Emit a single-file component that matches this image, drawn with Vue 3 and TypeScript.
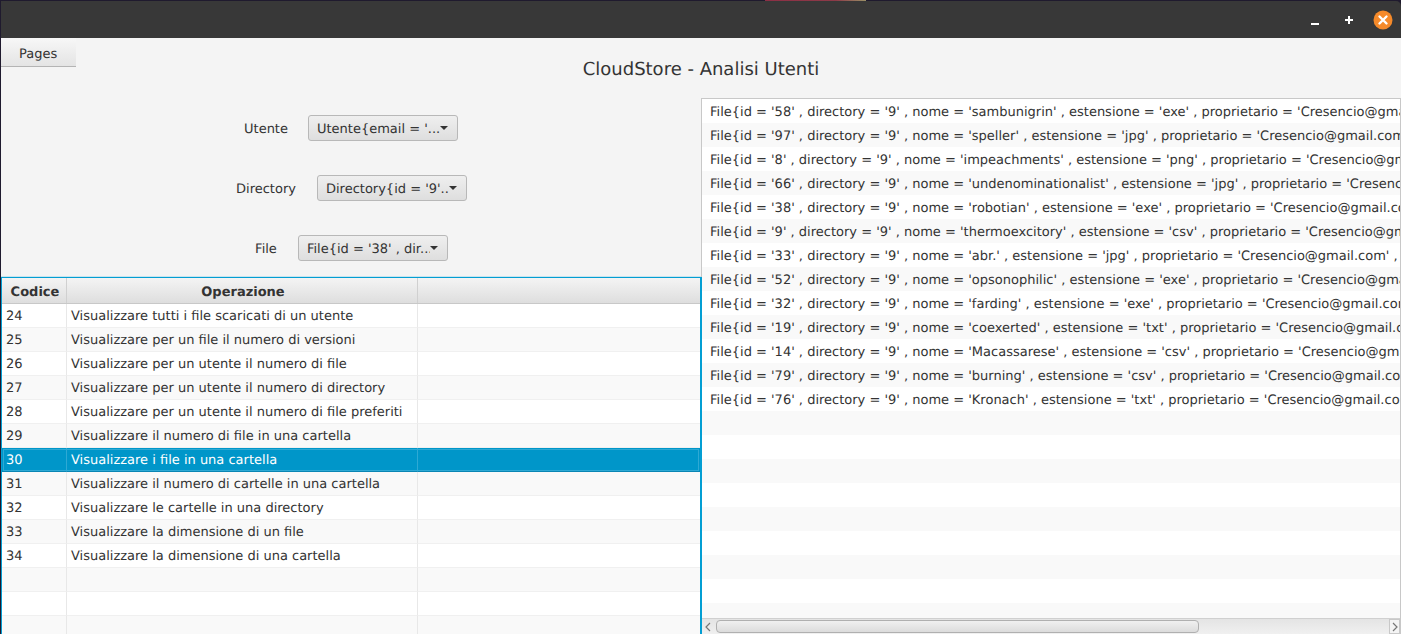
<script setup lang="ts">
const ops: [string, string][] = [
  ['24', 'Visualizzare tutti i file scaricati di un utente'],
  ['25', 'Visualizzare per un file il numero di versioni'],
  ['26', 'Visualizzare per un utente il numero di file'],
  ['27', 'Visualizzare per un utente il numero di directory'],
  ['28', 'Visualizzare per un utente il numero di file preferiti'],
  ['29', 'Visualizzare il numero di file in una cartella'],
  ['30', 'Visualizzare i file in una cartella'],
  ['31', 'Visualizzare il numero di cartelle in una cartella'],
  ['32', 'Visualizzare le cartelle in una directory'],
  ['33', 'Visualizzare la dimensione di un file'],
  ['34', 'Visualizzare la dimensione di una cartella'],
  ['', ''],
  ['', ''],
  ['', '']
]
const files: [string, string, string][] = [
  ['58', 'sambunigrin', 'exe'],
  ['97', 'speller', 'jpg'],
  ['8', 'impeachments', 'png'],
  ['66', 'undenominationalist', 'jpg'],
  ['38', 'robotian', 'exe'],
  ['9', 'thermoexcitory', 'csv'],
  ['33', 'abr.', 'jpg'],
  ['52', 'opsonophilic', 'exe'],
  ['32', 'farding', 'exe'],
  ['19', 'coexerted', 'txt'],
  ['14', 'Macassarese', 'csv'],
  ['79', 'burning', 'csv'],
  ['76', 'Kronach', 'txt']
]
const lines: string[] = files.map(
  ([id, nome, ext]) =>
    `File{id = '${id}' , directory = '9' , nome = '${nome}' , estensione = '${ext}' , proprietario = 'Cresencio@gmail.com' ,`
)
const listRows: string[] = [...lines, ...Array<string>(10).fill('')]
const forms = [
  { label: 'Utente', value: "Utente{email = '..." },
  { label: 'Directory', value: "Directory{id = '9'..." },
  { label: 'File', value: "File{id = '38' , dir..." }
]
</script>

<template>
  <div class="window">
    <header class="titlebar">
      <div class="strip"></div>
      <div class="controls">
        <svg class="ctl" width="12" height="12" viewBox="0 0 12 12"><path d="M2 10h8" stroke="#fff" stroke-width="2" /></svg>
        <svg class="ctl plus" width="12" height="12" viewBox="0 0 12 12"><path d="M6 2v8M2 6h8" stroke="#fff" stroke-width="2" /></svg>
        <svg class="ctl" width="20" height="20" viewBox="0 0 20 20">
          <circle cx="10" cy="10" r="9.5" fill="#f58a2a" />
          <path d="M6.5 6.5l7 7M13.5 6.5l-7 7" stroke="#fff" stroke-width="2.4" stroke-linecap="round" />
        </svg>
      </div>
    </header>

    <section class="top">
      <div class="menu">Pages</div>
      <h1 class="title">CloudStore - Analisi Utenti</h1>
      <div></div>
    </section>

    <main class="main">
      <div class="left">
        <div class="form">
          <div v-for="f in forms" :key="f.label" class="field">
            <span class="label">{{ f.label }}</span>
            <div class="combo">
              <span class="combo-text">{{ f.value }}</span>
              <span class="arrow"></span>
            </div>
          </div>
        </div>
        <div class="table">
          <div class="thead">
            <div class="th c1">Codice</div>
            <div class="th c2">Operazione</div>
            <div class="th c3"></div>
          </div>
          <div
            v-for="(r, i) in ops"
            :key="i"
            class="tr"
            :class="{ odd: i % 2 === 1, sel: r[0] === '30' }"
          >
            <div class="td c1">{{ r[0] }}</div>
            <div class="td c2">{{ r[1] }}</div>
            <div class="td c3"></div>
          </div>
        </div>
      </div>

      <div class="right">
        <div class="list">
          <div v-for="(l, i) in listRows" :key="i" class="li" :class="{ odd: i % 2 === 1 }">{{ l }}</div>
        </div>
        <div class="hbar">
          <div class="sb-btn">
            <svg width="8" height="10" viewBox="0 0 8 10"><path d="M6 1L2 5l4 4" fill="none" stroke="#777" stroke-width="1.2" /></svg>
          </div>
          <div class="thumb"></div>
          <div class="sb-fill"></div>
          <div class="sb-btn end">
            <svg width="8" height="10" viewBox="0 0 8 10"><path d="M2 1l4 4-4 4" fill="none" stroke="#777" stroke-width="1.2" /></svg>
          </div>
        </div>
      </div>
    </main>
  </div>
</template>

<style>
html,
body {
  margin: 0;
  padding: 0;
  overflow: hidden;
  background: #1f1a2e;
}
</style>

<style scoped>
.window {
  width: 1401px;
  height: 634px;
  overflow: hidden;
  display: flex;
  flex-direction: column;
  box-sizing: border-box;
  padding-left: 1px;
  background: #1f1a2e;
  font-family: "DejaVu Sans", sans-serif;
  font-size: 13px;
  color: #333;
  text-rendering: geometricPrecision;
}
.titlebar {
  position: relative;
  height: 37px;
  margin-top: 1px;
  flex: none;
  background: #383838;
  border-top-right-radius: 5px;
  display: flex;
  justify-content: flex-end;
  align-items: center;
  box-sizing: border-box;
}
.strip {
  position: absolute;
  left: 764px;
  top: -1px;
  width: 101px;
  height: 1px;
  background: linear-gradient(90deg, #8c2f45 0%, #8c3a48 70%, #9a9066 100%);
}
.controls {
  display: flex;
  align-items: center;
  gap: 22px;
  padding-right: 8px;
}
.ctl {
  display: block;
}
.plus {
  margin-right: -4px;
}
.top {
  flex: none;
  height: 60px;
  background: #f4f4f4;
  display: grid;
  grid-template-columns: 75px 1fr 75px;
  align-items: start;
}
.menu {
  height: 28px;
  line-height: 34px;
  padding-left: 18px;
  color: #333;
  background: linear-gradient(#f7f7f7, #e4e4e4);
  border-bottom: 1px solid #b4b4b4;
  overflow: hidden;
}
.title {
  margin: 21px 0 0;
  text-align: center;
  font-size: 18px;
  line-height: 22px;
  font-weight: 400;
  color: #333;
}
.main {
  flex: 1;
  min-height: 0;
  display: grid;
  grid-template-columns: 700px 700px;
  background: #f4f4f4;
}
.left {
  display: flex;
  flex-direction: column;
  min-height: 0;
}
.form {
  flex: none;
  height: 179px;
  box-sizing: border-box;
  padding: 17px 0 0 1px;
  display: flex;
  flex-direction: column;
  gap: 34px;
}
.field {
  display: flex;
  justify-content: center;
  align-items: center;
  gap: 21px;
  height: 26px;
}
.field:first-child {
  gap: 20px;
  padding-right: 1px;
}
.label {
  padding-top: 2px;
}
.combo {
  width: 150px;
  height: 26px;
  box-sizing: border-box;
  border: 1px solid #b8b8b8;
  border-radius: 3px;
  background: linear-gradient(#efefef, #dedede);
  display: flex;
  align-items: center;
  padding: 0 9px 0 8px;
  position: relative;
}
.combo-text {
  white-space: nowrap;
  overflow: hidden;
  flex: 1;
  min-width: 0;
  height: 24px;
  line-height: 28px;
}
.arrow {
  width: 0;
  height: 0;
  border-left: 4px solid transparent;
  border-right: 4px solid transparent;
  border-top: 4px solid #333;
  flex: none;
}
.table {
  flex: 1;
  min-height: 0;
  position: relative;
  z-index: 1;
  border: 1px solid #039ed3;
  border-bottom: none;
  background: #fff;
  box-shadow: 1px 0 0 #039ed3, 0 -1px 0 #c8e4ee;
}
.thead {
  display: flex;
  height: 26px;
  background: linear-gradient(#f4f4f4, #dedede);
  border-bottom: 1px solid #c8c8c8;
  box-sizing: border-box;
}
.th {
  box-sizing: border-box;
  font-weight: 700;
  text-align: center;
  line-height: 30px;
  padding-left: 2px;
  border-right: 1px solid #d0d0d0;
  overflow: hidden;
}
.c1 {
  width: 65px;
  flex: none;
}
.c2 {
  width: 351px;
  flex: none;
}
.c3 {
  flex: 1;
}
.th.c3 {
  border-right: none;
}
.tr {
  display: flex;
  height: 24px;
  background: #fff;
  box-sizing: border-box;
}
.tr.odd {
  background: #f9f9f9;
}
.td {
  box-sizing: border-box;
  padding-left: 4px;
  line-height: 25px;
  border-right: 1px solid #e8e8e8;
  border-bottom: 1px solid #f0f0f0;
  white-space: nowrap;
  overflow: hidden;
}
.td.c3 {
  border-right: none;
}
.tr.sel {
  background: #0096c9;
  outline: 1px solid #2ea9d4;
  outline-offset: -2px;
}
.tr.sel .td {
  color: #fff;
  border-right-color: #2ea9d4;
  border-bottom-color: #0a86b4;
}
.right {
  display: flex;
  flex-direction: column;
  min-height: 0;
  border-top: 1px solid #c8c8c8;
  border-left: 1px solid #c8c8c8;
  border-right: 1px solid #c8c8c8;
  background: #fff;
}
.list {
  flex: 1;
  min-height: 0;
  overflow: hidden;
}
.li {
  height: 24px;
  line-height: 28px;
  padding-left: 8px;
  white-space: nowrap;
  overflow: hidden;
  background: #fff;
}
.li.odd {
  background: #f9f9f9;
}
.hbar {
  flex: none;
  height: 16px;
  display: flex;
  align-items: center;
  background: linear-gradient(#e4e4e4, #f0f0f0);
  border-top: 1px solid #d0d0d0;
  box-sizing: border-box;
}
.sb-btn {
  width: 12px;
  height: 15px;
  flex: none;
  display: flex;
  align-items: center;
  justify-content: center;
}
.sb-btn.end {
  width: 11px;
  border: 1px solid #c8c8c8;
  box-sizing: border-box;
  background: #f4f4f4;
}
.thumb {
  width: 483px;
  height: 13px;
  margin-left: 2px;
  flex: none;
  box-sizing: border-box;
  border: 1px solid #b0b0b0;
  border-radius: 4px;
  background: linear-gradient(#f0f0f0, #dcdcdc);
}
.sb-fill {
  flex: 1;
}
</style>
